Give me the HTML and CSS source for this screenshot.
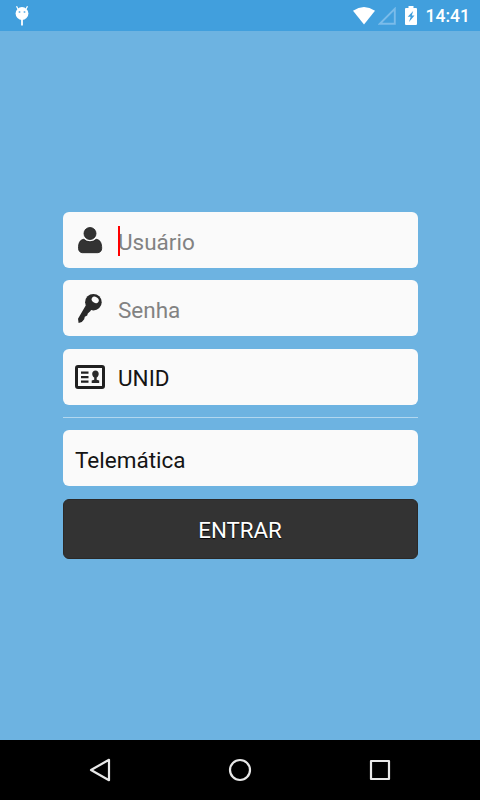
FILE: index.html
```html
<!DOCTYPE html>
<html lang="pt-BR">
<head>
<meta charset="utf-8">
<title>Entrar</title>
<link rel="stylesheet" href="styles.css">
</head>
<body>
<header class="status">
  <svg class="droid" width="14" height="22" viewBox="0 0 14 22"><path d="M3 4L1.500 1.200M11 4l1.500-2.800" stroke="#fff" stroke-width="1.300"/><circle cx="7" cy="8.500" r="6.400" fill="#fff"/><path d="M6.100 14h1.800v6.500H6.100z" fill="#fff"/><circle cx="4.500" cy="7" r="1" fill="#75b9e8"/><circle cx="9.500" cy="7" r="1" fill="#75b9e8"/></svg>
  <svg class="wifi" width="22" height="18" viewBox="0 0 22 18"><path d="M0 3.800Q11-3.600 22 3.800L11 17.600z" fill="#fff"/></svg>
  <svg class="signal" width="18" height="18" viewBox="0 0 18 18"><path d="M1.800 16.800H16.800V1.800z" fill="none" stroke="#7abcea" stroke-width="1.900"/></svg>
  <svg class="battery" width="12" height="19" viewBox="0 0 12 19"><path d="M3.500 0h5v2H11q1 0 1 1v15q0 1-1 1H1q-1 0-1-1V3q0-1 1-1h2.500z" fill="#fff"/><path d="M8.200 5L2.700 10.800h3L4 16l5.500-6.500H6.800z" fill="#419fdd"/></svg>
  <span class="clock">14:41</span>
</header>
<main class="screen">
  <form class="login">
    <label class="field">
      <svg class="icon" width="30" height="30" viewBox="0 0 30 30"><path d="M8.800 14.300C4.500 14.900 3.500 18.500 3.500 23.300 3.500 26 5.200 27.700 7.300 27.700h15.400c2.300 0 4-1.700 4-4.400 0-4.800-1.200-8.400-5.500-9A9 9 0 0 1 8.800 14.300z" fill="#333" stroke="#1c1c1c" stroke-width=".8"/><circle cx="15" cy="8.500" r="6" fill="#333" stroke="#1c1c1c" stroke-width=".8"/></svg>
      <span class="hint">Usuário<i class="caret"></i></span>
    </label>
    <label class="field">
      <svg class="icon" width="30" height="30" viewBox="0 0 30 30"><path d="M11 12L3 25.800 3.600 30 6.800 29 9.200 26.200 9.800 23.800 12.200 22.500 12.800 20.500 15.500 18 16.500 16z" fill="#292929"/><circle cx="18.400" cy="9.200" r="8.300" fill="#292929"/><ellipse cx="20.200" cy="6.900" rx="3.800" ry="2.900" transform="rotate(35 20.200 6.900)" fill="#fafafa"/></svg>
      <span class="hint">Senha</span>
    </label>
    <label class="field">
      <svg class="icon" width="30" height="30" viewBox="0 0 30 30"><rect x="1.500" y="4.500" width="27" height="21" rx="1.500" fill="none" stroke="#202020" stroke-width="3"/><path d="M6 10.700h7.500M6 15.200h7.500M6 19.700h7.500" stroke="#202020" stroke-width="2.300"/><path d="M20.500 8.500c2 0 3.200 1.400 3.200 3.300 0 1.600-.8 3.100-2 3.800v2.200l2.500.8V21h-7.500v-2.400l2.500-.8v-2.200c-1.200-.7-2-2.200-2-3.800 0-1.900 1.300-3.300 3.300-3.300z" fill="#292929"/></svg>
      <span>UNID</span>
    </label>
    <hr class="rule">
    <label class="field"><span>Telemática</span></label>
    <button class="enter" type="button">ENTRAR</button>
  </form>
</main>
<nav class="nav">
  <svg width="24" height="24" viewBox="0 0 24 24"><path d="M21 1.800V22.200L3 12z"/></svg>
  <svg width="24" height="24" viewBox="0 0 24 24"><circle cx="12" cy="12" r="10"/></svg>
  <svg width="24" height="24" viewBox="0 0 24 24"><rect x="3" y="3" width="18" height="18"/></svg>
</nav>
</body>
</html>
```
FILE: styles.css
```css
* { box-sizing: border-box; }
body {
  margin: 0;
  height: 800px;
  display: flex;
  flex-direction: column;
  overflow: hidden;
  background: #6db3e1;
  font-family: Roboto, sans-serif;
}
.status {
  height: 31px;
  display: flex;
  align-items: flex-start;
  padding: 5px 10px 0 15px;
  background: #419fdd;
  color: #fff;
}
.status svg { flex: none; }
.wifi { margin: 2px 0 0 auto; }
.signal { margin: 2px 0 0 3px; }
.battery { margin: 1px 0 0 9px; }
.clock {
  margin-left: 9px;
  font-size: 17.500px;
  font-weight: 500;
  line-height: 23px;
}
.screen { flex: 1; padding: 181.300px 62.500px 0; }
.login { display: flex; flex-direction: column; }
.field {
  height: 56px;
  margin-bottom: 12.200px;
  display: flex;
  align-items: center;
  gap: 13px;
  padding: 3px 12.500px 0;
  border-radius: 6px;
  background: #fafafa;
  color: #141414;
  font-size: 22.500px;
}
.icon { margin-top: -3px; flex: none; }
.hint { position: relative; color: #828282; }
.caret {
  position: absolute;
  left: 0;
  top: -3px;
  width: 2px;
  height: 30px;
  background: #f00;
}
.rule {
  width: 100%;
  height: 1px;
  margin: 0 0 12.600px;
  border: 0;
  background: #b2d7ef;
}
.enter {
  height: 60px;
  padding: 3px 0 0;
  border: 1px solid #2b2927;
  border-radius: 6px;
  background: #333;
  color: #fff;
  font: 22.300px Roboto, sans-serif;
  text-shadow: 0 1px 1px #000;
}
.nav {
  height: 60px;
  display: flex;
  align-items: center;
  justify-content: center;
  gap: 116px;
  background: #000;
}
.nav svg { fill: none; stroke: #e8e8e8; stroke-width: 2.200; stroke-linejoin: round; }
```
